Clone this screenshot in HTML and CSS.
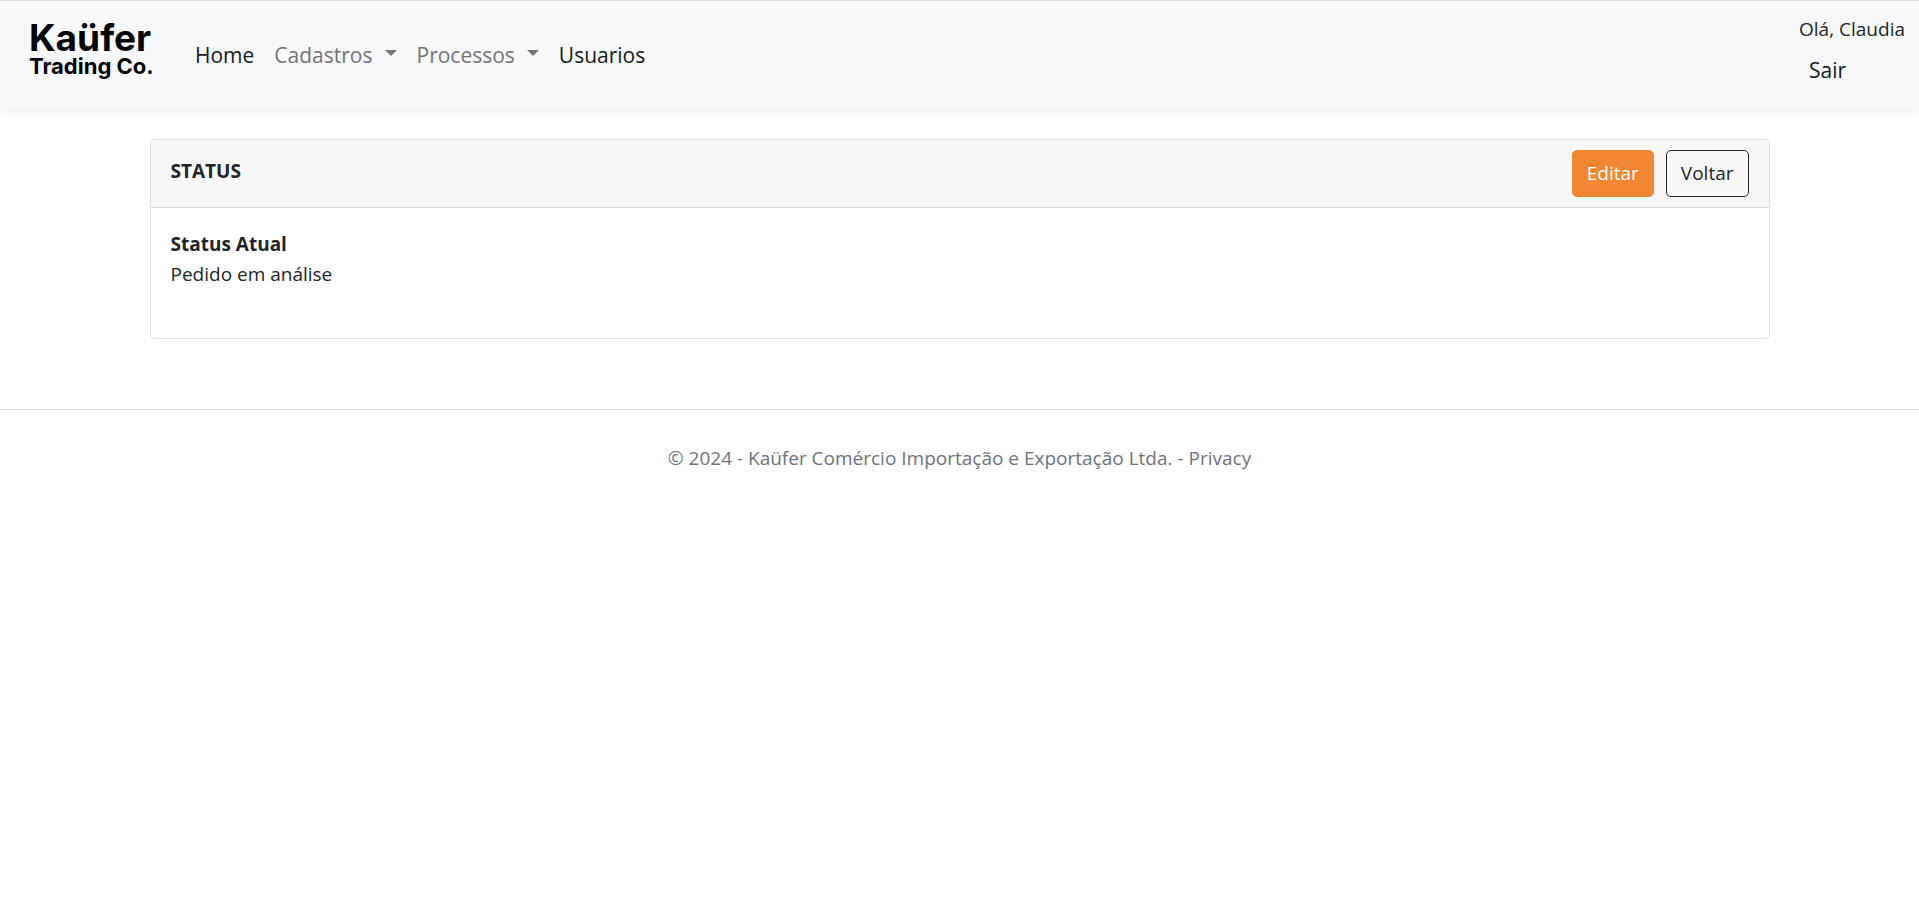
FILE: index.html
```html
<!DOCTYPE html>
<html lang="pt-BR">
<head>
<meta charset="utf-8">
<meta name="viewport" content="width=device-width, initial-scale=1">
<title>Status - Kaüfer Trading Co.</title>
<link rel="stylesheet" href="styles.css">
</head>
<body>
<header class="navbar">
  <a class="brand" href="#"><span class="brand-name">Kaüfer</span><span class="brand-sub">Trading Co.</span></a>
  <nav class="nav">
    <a class="nav-link" href="#">Home</a>
    <button class="nav-link nav-toggle" type="button">Cadastros<span class="caret"></span></button>
    <button class="nav-link nav-toggle" type="button">Processos<span class="caret"></span></button>
    <a class="nav-link" href="#">Usuarios</a>
  </nav>
  <div class="account">
    <span class="greeting">Olá, Claudia</span>
    <button class="logout" type="button">Sair</button>
  </div>
</header>
<main class="container">
  <section class="card">
    <div class="card-header">
      <h1 class="card-title">STATUS</h1>
      <div class="actions">
        <a class="btn btn-primary" href="#">Editar</a>
        <a class="btn btn-outline" href="#">Voltar</a>
      </div>
    </div>
    <dl class="card-body">
      <dt class="term">Status Atual</dt>
      <dd class="value">Pedido em análise</dd>
    </dl>
  </section>
</main>
<footer class="footer">© 2024 - Kaüfer Comércio Importação e Exportação Ltda. - <a class="footer-link" href="#">Privacy</a></footer>
</body>
</html>
```
FILE: styles.css
```css
* {
  box-sizing: border-box;
}

body {
  margin: 0;
  background: #fff;
  color: #212529;
  font-family: "Segoe UI", "Open Sans", "Noto Sans", sans-serif;
  font-size: 19px;
  line-height: 30px;
}

a {
  color: inherit;
  text-decoration: none;
}

button {
  border: 0;
  background: none;
  font-family: inherit;
  cursor: pointer;
}

.navbar {
  display: flex;
  align-items: flex-start;
  padding: 13px 14px 13px 29px;
  border-top: 1px solid #dee2de;
  background: #f8f9fb;
  box-shadow: 0 4px 8px rgba(0, 0, 0, 0.05);
}

.brand {
  display: flex;
  flex-direction: column;
  width: 156px;
  padding-top: 6px;
  color: #000;
  font-family: "Century Gothic", Inter, sans-serif;
  font-weight: 700;
}

.brand-name {
  font-size: 37px;
  line-height: 36px;
}

.brand-sub {
  font-size: 22px;
  line-height: 20px;
}

.nav {
  display: flex;
  padding-top: 16px;
}

.nav-link {
  display: flex;
  align-items: center;
  padding: 10px;
  color: #16191c;
  font-size: 21px;
  line-height: 30px;
}

.nav-toggle {
  color: #747576;
}

.caret {
  margin: 0 0 4px 12px;
  border: 6px solid transparent;
  border-top-color: currentColor;
  border-bottom: 0;
}

.account {
  display: flex;
  flex-direction: column;
  align-items: flex-start;
  margin-left: auto;
}

.logout {
  padding: 10px;
  color: #16191c;
  font-size: 21px;
  line-height: 32px;
}

.container {
  max-width: 1660px;
  margin: 0 auto;
  padding: 30px 20px 70px;
}

.card {
  border: 1px solid #dfdfdf;
  border-radius: 5px;
}

.card-header {
  display: flex;
  align-items: flex-start;
  justify-content: space-between;
  padding: 10px 20px;
  border-bottom: 1px solid #d8d8d8;
  border-radius: 4px 4px 0 0;
  background: #f7f7f7;
}

.card-title {
  margin: 6px 0 0;
  font-size: 19px;
  line-height: 30px;
}

.actions {
  display: flex;
  gap: 12px;
}

.btn {
  padding: 8px 14px;
  border: 1px solid #212529;
  border-radius: 5px;
  line-height: 29px;
}

.btn-primary {
  border-color: #f18633;
  background: #f18633;
  color: #fff;
}

.card-body {
  margin: 0;
  padding: 21px 20px 49px;
}

.term {
  font-weight: 700;
}

.value {
  margin: 0;
}

.footer {
  padding: 33px 20px;
  border-top: 1px solid #dee2e6;
  color: #6c757d;
  text-align: center;
}
```
